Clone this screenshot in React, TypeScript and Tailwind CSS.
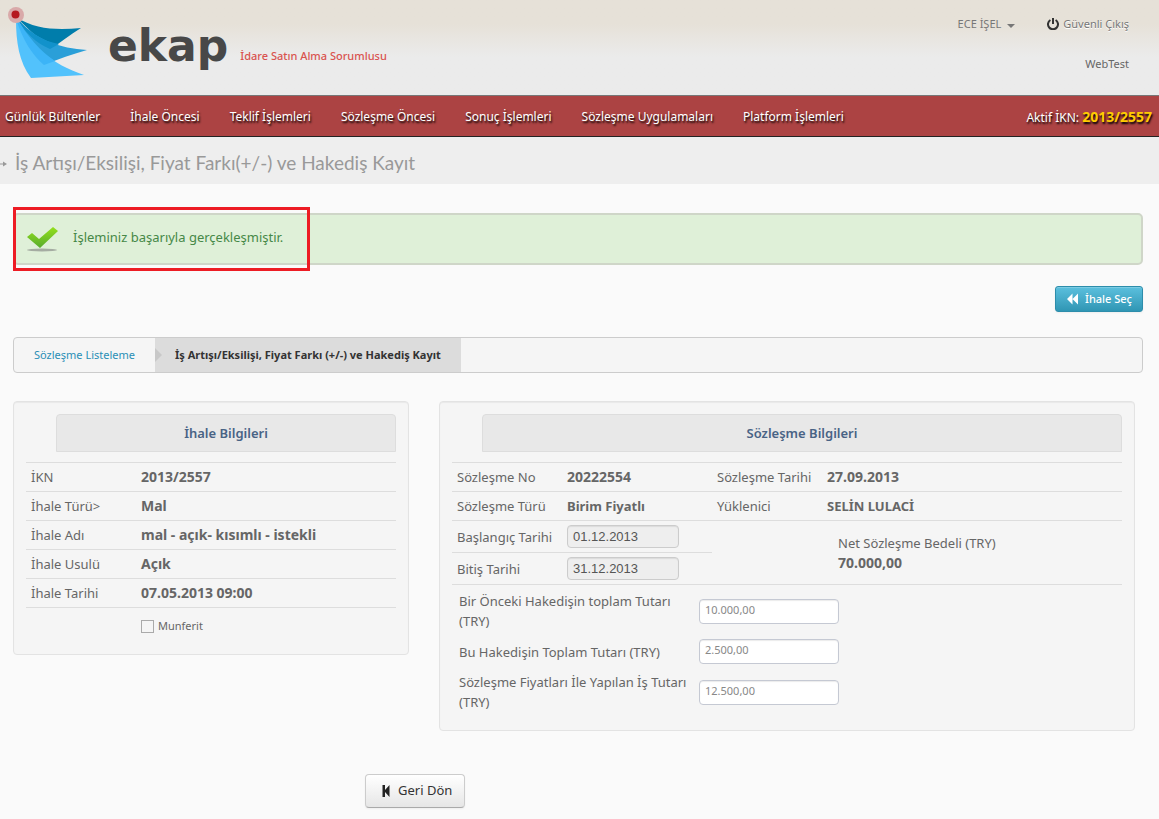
import React, { ReactNode } from 'react';

interface NavItem {
    label: string;
}

interface RowProps {
    label: string;
    value: string;
}

interface AmountProps {
    id: string;
    label: string;
    value: string;
}

const NAV_ITEMS: NavItem[] = [
    { label: 'Günlük Bültenler' },
    { label: 'İhale Öncesi' },
    { label: 'Teklif İşlemleri' },
    { label: 'Sözleşme Öncesi' },
    { label: 'Sonuç İşlemleri' },
    { label: 'Sözleşme Uygulamaları' },
    { label: 'Platform İşlemleri' }
];

const TENDER_ROWS: RowProps[] = [
    { label: 'İKN', value: '2013/2557' },
    { label: 'İhale Türü>', value: 'Mal' },
    { label: 'İhale Adı', value: 'mal - açık- kısımlı - istekli' },
    { label: 'İhale Usulü', value: 'Açık' },
    { label: 'İhale Tarihi', value: '07.05.2013 09:00' }
];

const AMOUNTS: AmountProps[] = [
    { id: 'onceki', label: 'Bir Önceki Hakedişin toplam Tutarı (TRY)', value: '10.000,00' },
    { id: 'bu', label: 'Bu Hakedişin Toplam Tutarı (TRY)', value: '2.500,00' },
    { id: 'toplam', label: 'Sözleşme Fiyatları İle Yapılan İş Tutarı (TRY)', value: '12.500,00' }
];

function Logo() {
    return (
        <svg width="92" height="84" viewBox="0 0 92 84" aria-hidden="true">
            <path d="M16 17 C36 30 58 30 81 28 C70 35 60 42 50 50 Z" fill="#007dab" />
            <path d="M16 17 C36 41 60 48 87 50 C73 54 58 59 44 65 Z" fill="#2a9fd8" />
            <path d="M16 17 C28 32 42 41 59 44 L50 49 C36 43 25 33 16 17Z" fill="#1292cb" />
            <path d="M16 17 C30 46 52 64 84 75 L31 78 C19 62 16 42 16 19Z" fill="#52c2fc" />
            <path d="M16 17 C28 37 40 51 55 61 L44 65 C32 55 23 40 16 19Z" fill="#3cb4f7" />
            <circle cx="16" cy="15" r="8" fill="#d9a9a9" />
            <circle cx="15.5" cy="14.5" r="4" fill="#b5191f" />
        </svg>
    );
}

function Header() {
    return (
        <header className="flex h-24 justify-between border-b border-[#777] bg-linear-to-b from-[#e6e1d8] from-25% to-[#ebebeb] to-60% pr-[30px]">
            <div className="flex items-start">
                <Logo />
                <span className="ml-4 mt-4 font-['DejaVu_Sans'] text-[44px] font-bold leading-[60px] text-[#484848]">ekap</span>
                <span className="ml-3 mt-12 text-[11px] font-medium leading-4 text-[#d9534f]">İdare Satın Alma Sorumlusu</span>
            </div>
            <div className="flex flex-col items-end pt-3.5 text-[11px] leading-5 text-[#777]">
                <div className="flex gap-8 [text-shadow:0_1px_0_#fff]">
                    <button type="button" className="flex items-center gap-1.5">
                        ECE İŞEL
                        <span className="mt-1 border-x-4 border-t-4 border-x-transparent border-t-[#777]" />
                    </button>
                    <a href="#cikis" className="flex items-center gap-1">
                        <svg width="12" height="12" viewBox="0 0 12 12" fill="none" stroke="#333" strokeWidth="2">
                            <path d="M3.4 2 A5 5 0 1 0 8.6 2 M6 0 V6" />
                        </svg>
                        Güvenli Çıkış
                    </a>
                </div>
                <span className="mt-5 text-[#666]">WebTest</span>
            </div>
        </header>
    );
}

function NavBar() {
    return (
        <nav className="flex h-[41px] items-center justify-between border-b border-[#222] bg-[#ac4343] px-[5px] pt-0.5 text-xs text-white [text-shadow:1px_2px_2px_#000]">
            <div className="flex gap-[30px]">
                {NAV_ITEMS.map((item) => (
                    <a key={item.label} href="#menu">{item.label}</a>
                ))}
            </div>
            <span className="pr-0.5">
                Aktif İKN: <b className="text-sm text-[#fc0]">2013/2557</b>
            </span>
        </nav>
    );
}

function SuccessAlert() {
    return (
        <div className="relative flex h-[52px] items-center rounded-[5px] border-2 border-[#cfd6c8] bg-[#dff0d8] pl-3 text-[13px] text-[#468847]">
            <svg width="32" height="28" viewBox="0 0 32 28" aria-hidden="true">
                <defs>
                    <linearGradient id="tick" x1="0" y1="0" x2="0" y2="1">
                        <stop offset="0" stopColor="#94e01c" />
                        <stop offset="1" stopColor="#57ab2e" />
                    </linearGradient>
                </defs>
                <ellipse cx="15" cy="25" rx="15" ry="1.5" fill="#a5aca2" />
                <path d="M0 12 L5 8 L12 14 L26 2 L31 6 L13 23 Z" fill="url(#tick)" />
            </svg>
            <span className="ml-3.5 pb-0.5">İşleminiz başarıyla gerçekleşmiştir.</span>
            <div className="pointer-events-none absolute -left-0.5 -top-2 h-16 w-[297px] border-3 border-[#ed1c24]" />
        </div>
    );
}

function Breadcrumb() {
    return (
        <ol className="flex h-9 items-stretch overflow-hidden rounded-[4px] border border-[#ccc] bg-[#f5f5f5] text-[11px] leading-[34px]">
            <li className="px-5 text-[#2a8fb5]">
                <a href="#liste">Sözleşme Listeleme</a>
            </li>
            <li className="relative bg-[#dcdcdc] px-5 font-bold text-[#333]">
                <span className="absolute left-0 top-2.5 border-y-[7px] border-l-[7px] border-y-transparent border-l-[#c8c8c8]" />
                İş Artışı/Eksilişi, Fiyat Farkı (+/-) ve Hakediş Kayıt
            </li>
        </ol>
    );
}

function Panel({ title, className, children }: { title: string; className: string; children: ReactNode }) {
    return (
        <section className={'rounded-[4px] border border-[#e3e3e3] bg-[#f5f5f5] px-3 pb-[18px] pt-3 shadow-[inset_0_1px_1px_rgba(0,0,0,0.05)] ' + className}>
            <h2 className="mb-2.5 ml-[30px] rounded-t-[4px] border border-[#ddd] bg-[#e8e8e8] text-center text-[13px] font-semibold leading-9 text-[#486385]">
                {title}
            </h2>
            {children}
        </section>
    );
}

function TenderPanel() {
    return (
        <Panel title="İhale Bilgileri" className="w-[396px] shrink-0">
            <table className="w-full text-left text-[13px] leading-5">
                <tbody>
                    {TENDER_ROWS.map((row) => (
                        <tr key={row.label} className="h-[29px] border-y border-[#ddd]">
                            <th className="w-[110px] pl-[5px] font-normal">{row.label}</th>
                            <td className="pl-[5px] text-sm font-bold leading-5">{row.value}</td>
                        </tr>
                    ))}
                </tbody>
            </table>
            <label className="ml-[115px] mt-2 flex items-center gap-1 text-[11px] leading-5">
                <input type="checkbox" className="size-[13px] appearance-none border border-[#aaa] bg-[#f5f5f5]" />
                Munferit
            </label>
        </Panel>
    );
}

function DateField({ id, label, value }: AmountProps) {
    return (
        <>
            <th className="w-[110px] border-b border-[#ddd] pl-[5px] font-normal">
                <label htmlFor={id}>{label}</label>
            </th>
            <td className="w-[150px] border-b border-[#ddd] pl-[5px]">
                <input
                    id={id}
                    readOnly
                    defaultValue={value}
                    className="block h-[23px] w-28 rounded-[4px] border border-[#ccc] bg-[#eee] px-[5px] font-['Liberation_Sans'] text-[13px] text-[#555] shadow-[inset_0_1px_1px_rgba(0,0,0,0.08)]"
                />
            </td>
        </>
    );
}

function ContractPanel() {
    return (
        <Panel title="Sözleşme Bilgileri" className="flex-1">
            <table className="w-full text-left text-[13px] leading-5">
                <tbody>
                    <tr className="h-[29px] border-y border-[#ddd]">
                        <th className="w-[110px] pl-[5px] font-normal">Sözleşme No</th>
                        <td className="w-[150px] pl-[5px] text-sm font-bold leading-5">20222554</td>
                        <th className="w-[110px] pl-[5px] font-normal">Sözleşme Tarihi</th>
                        <td className="pl-[5px] text-sm font-bold leading-5">27.09.2013</td>
                    </tr>
                    <tr className="h-[29px] border-b border-[#ddd]">
                        <th className="pl-[5px] font-normal">Sözleşme Türü</th>
                        <td className="pl-[5px] font-bold">Birim Fiyatlı</td>
                        <th className="pl-[5px] font-normal">Yüklenici</th>
                        <td className="pl-[5px] font-bold">SELİN LULACİ</td>
                    </tr>
                    <tr className="h-8">
                        <DateField id="baslangic" label="Başlangıç Tarihi" value="01.12.2013" />
                        <td rowSpan={2} className="border-b border-[#ddd]" />
                        <td rowSpan={2} className="border-b border-[#ddd] pl-4">
                            Net Sözleşme Bedeli (TRY)
                            <b className="block text-sm leading-5">70.000,00</b>
                        </td>
                    </tr>
                    <tr className="h-8">
                        <DateField id="bitis" label="Bitiş Tarihi" value="31.12.2013" />
                    </tr>
                </tbody>
            </table>
            <div className="flex flex-col gap-2 pl-[7px] pt-1.5 text-[13px] leading-5">
                {AMOUNTS.map((amount) => (
                    <div key={amount.id} className="flex items-center">
                        <label htmlFor={amount.id} className="w-60 pr-2.5">{amount.label}</label>
                        <input
                            id={amount.id}
                            defaultValue={amount.value}
                            className="h-[25px] w-[140px] rounded-[4px] border border-[#c5c9d3] bg-white px-[5px] pb-1 text-[11px] text-[#888] shadow-[inset_0_1px_1px_rgba(0,0,0,0.08)]"
                        />
                    </div>
                ))}
            </div>
        </Panel>
    );
}

export default function App() {
    return (
        <div className="min-h-screen bg-[#fafafa] pb-2 font-['Noto_Sans','Open_Sans',sans-serif] text-[13px] text-[#666]">
            <Header />
            <NavBar />
            <div className="flex h-[47px] items-center bg-[#eee] pt-1.5 text-[#999]">
                <svg width="7" height="8" viewBox="0 0 7 8" fill="#999">
                    <path d="M0 3.5 H3 V1.5 L7 4 L3 6.5 V4.5 H0Z" />
                </svg>
                <h1 className="ml-2 font-['Lato','Open_Sans',sans-serif] text-[19px]">
                    İş Artışı/Eksilişi, Fiyat Farkı(+/-) ve Hakediş Kayıt
                </h1>
            </div>
            <main className="pl-[13px] pr-4 pt-[29px]">
                <SuccessAlert />
                <div className="flex justify-end py-[21px]">
                    <button
                        type="button"
                        className="flex h-[26px] items-center gap-1.5 rounded-[3px] border border-[#2d8dab] bg-linear-to-b from-[#5bc0de] to-[#2f96b4] px-2.5 text-[11px] font-medium text-white shadow-[inset_0_1px_0_rgba(255,255,255,0.2),0_1px_2px_rgba(0,0,0,0.05)]"
                    >
                        <svg width="13" height="12" viewBox="0 0 13 12" fill="#fff">
                            <path d="M6.5 0.5 V11.5 L1 6Z M12 0.5 V11.5 L6.5 6Z" />
                        </svg>
                        İhale Seç
                    </button>
                </div>
                <div className="pt-1">
                    <Breadcrumb />
                </div>
                <div className="flex items-start gap-[30px] pr-2 pt-7">
                    <TenderPanel />
                    <ContractPanel />
                </div>
                <button
                    type="button"
                    className="ml-[352px] mt-[43px] flex h-[34px] items-center gap-2 rounded-[4px] border border-[#ccc] border-b-[#aaa] bg-linear-to-b from-white to-[#e6e6e6] px-3 text-[13px] text-[#333] shadow-[0_1px_2px_rgba(0,0,0,0.05)]"
                >
                    <svg width="12" height="12" viewBox="0 0 12 12" fill="#222">
                        <path d="M4.5 0 H7 V5 L11.5 0 V12 L7 7 V12 H4.5Z" />
                    </svg>
                    Geri Dön
                </button>
            </main>
        </div>
    );
}
